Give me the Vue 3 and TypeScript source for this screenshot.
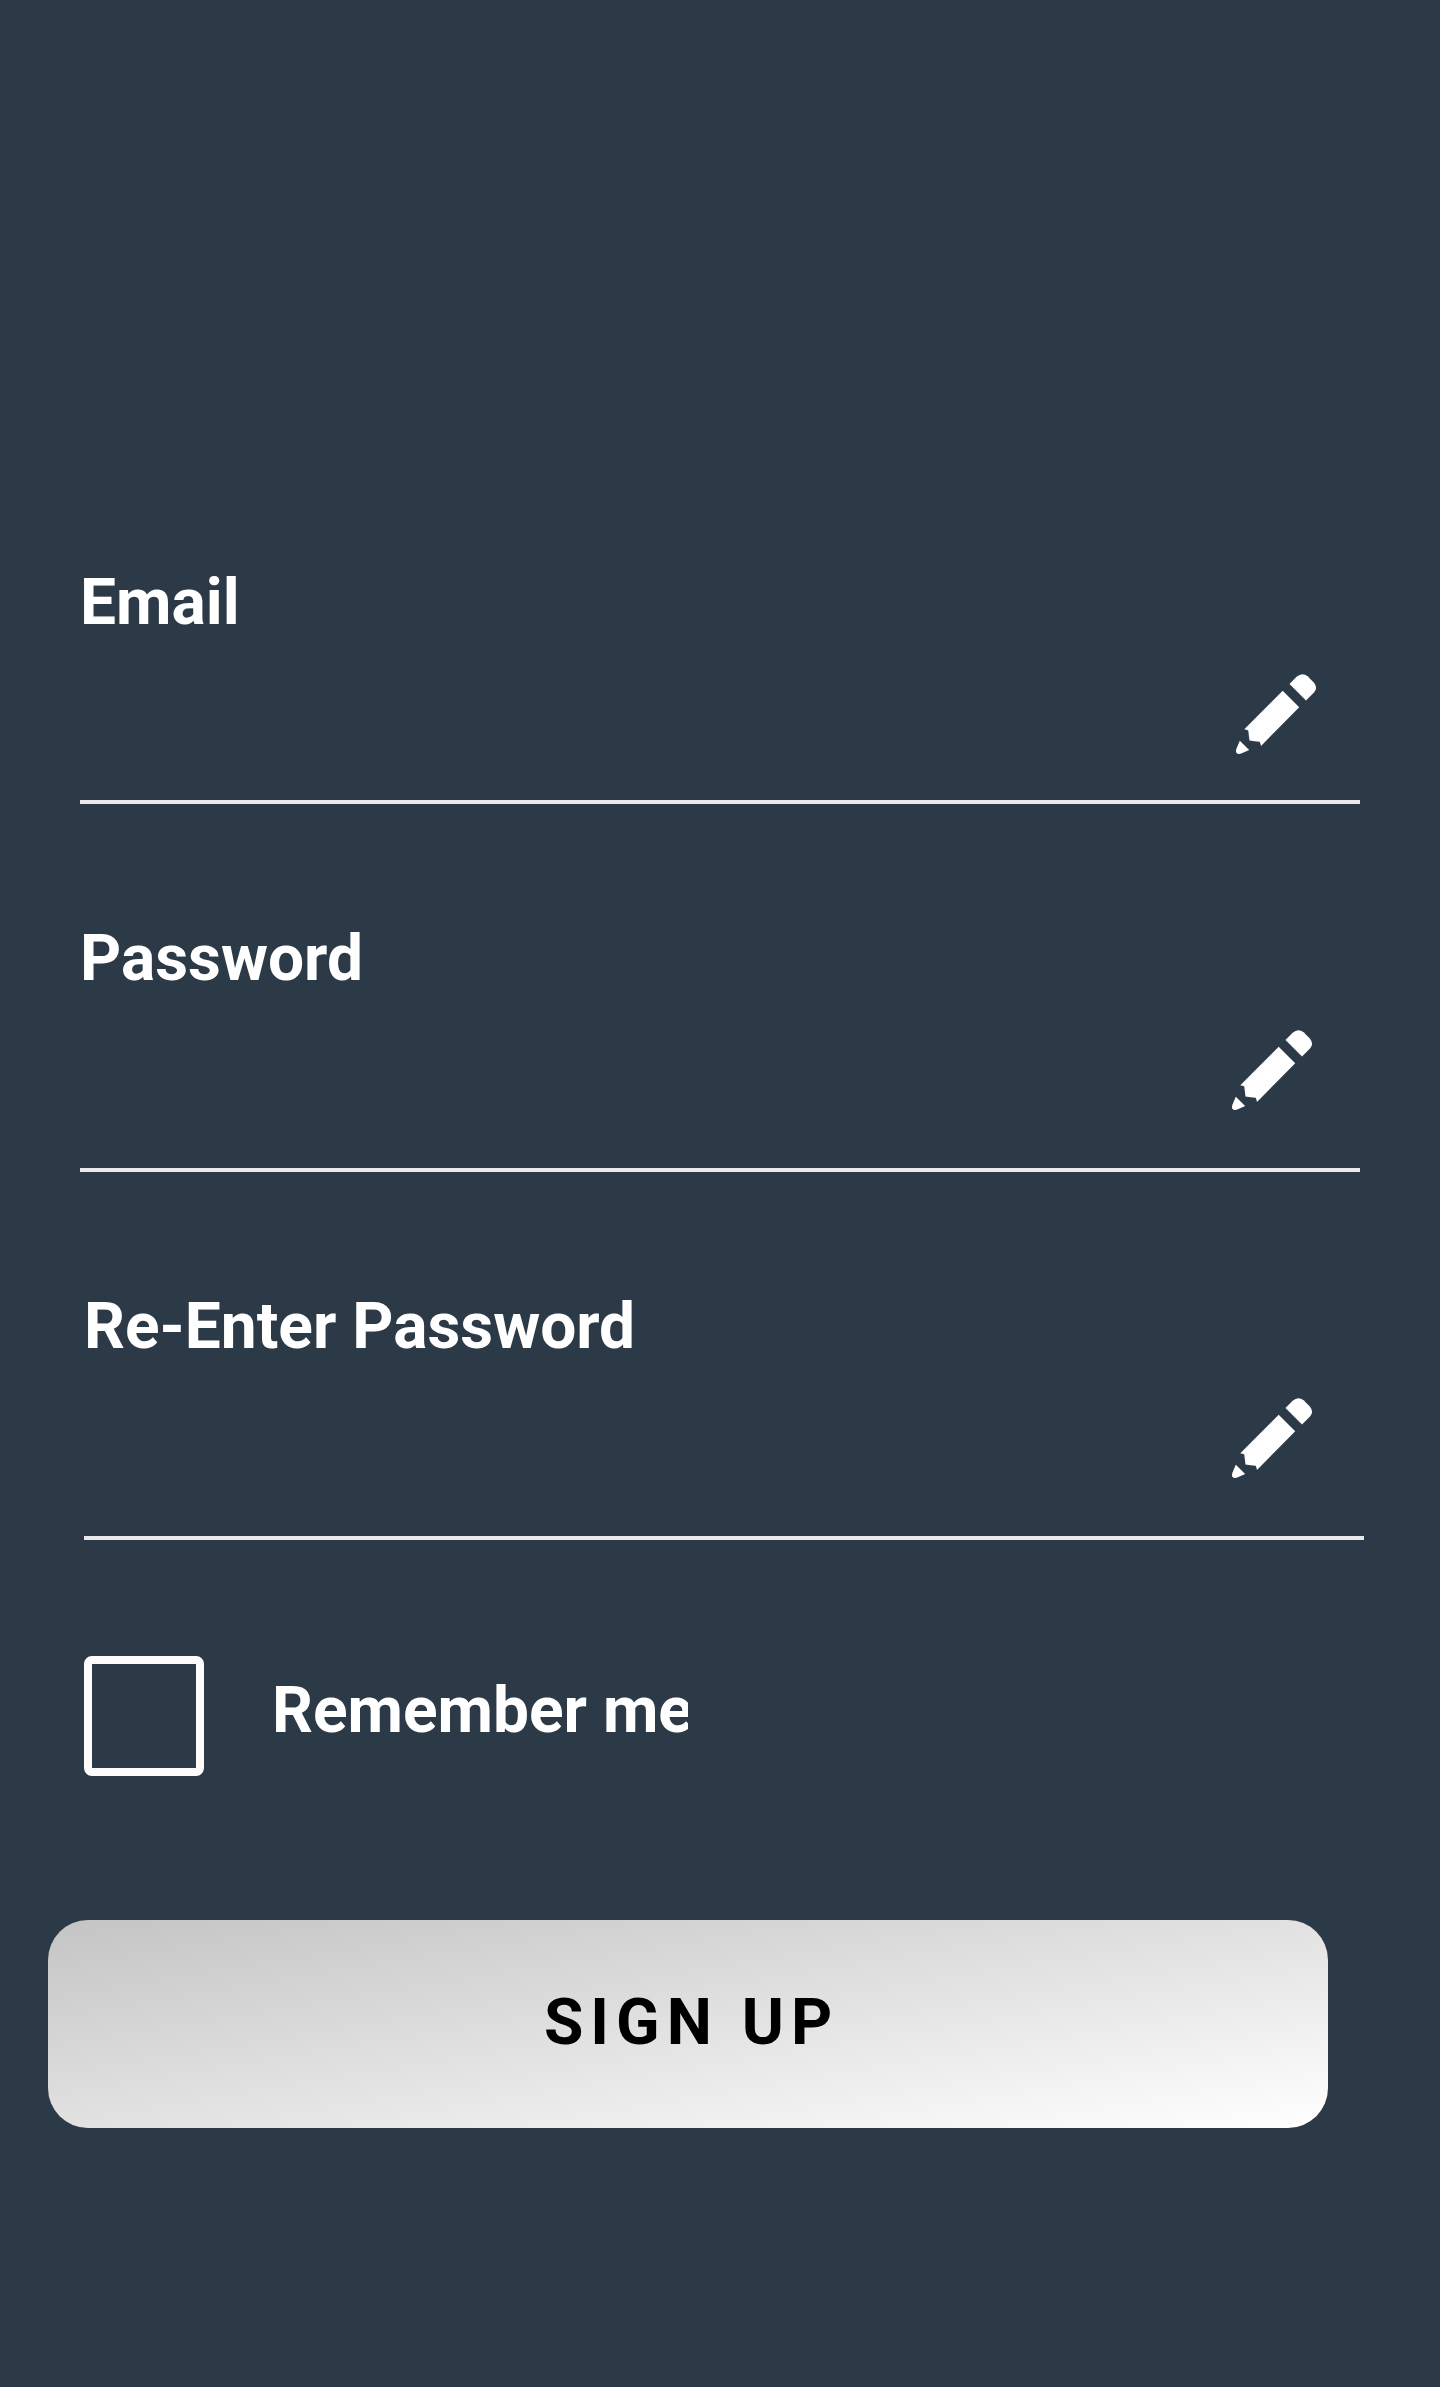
<script setup lang="ts">
import { ref } from 'vue'

interface Field {
  id: string
  label: string
}

const fields: Field[] = [
  { id: 'email', label: 'Email' },
  { id: 'password', label: 'Password' },
  { id: 'confirm', label: 'Re-Enter Password' },
]

const remember = ref<boolean>(false)
</script>

<template>
  <main class="screen">
    <section v-for="field in fields" :key="field.id" class="field" :class="field.id">
      <div class="label">{{ field.label }}</div>
      <svg class="pencil" viewBox="0 0 80 80" aria-hidden="true">
        <path d="M53.5 10 L60.6 2.8 Q66 -2.2 71.6 2.2 L77.8 8.4 Q82.2 13.6 78 18.4 L70 26.4 Z" />
        <path d="M46.7 16.8 L63.2 33.3 L25 71.9 Q24.6 69.6 23.6 67.8 Q18.5 67.4 13.5 66.6 Q12.8 61.6 12.3 56.6 Q10.5 55.6 8.3 55.2 Z" />
        <path d="M3.8 66.8 L13.2 76 L5.2 79.6 Q1.8 80.6 0.2 78.4 Q-0.2 77 0.1 75.6 Z" />
      </svg>
    </section>
    <div class="remember" @click="remember = !remember">
      <span class="box" role="checkbox" :aria-checked="remember"></span>
      <span class="remember-text">Remember me</span>
    </div>
    <button class="submit" type="button">SIGN UP</button>
  </main>
</template>

<style>
body {
  margin: 0;
  background: #2c3a47;
}
</style>

<style scoped>
.screen {
  box-sizing: border-box;
  width: 1440px;
  height: 2387px;
  padding-top: 565px;
  overflow: hidden;
  display: flex;
  flex-direction: column;
  background: #2c3a47;
  color: #fff;
  font-family: Roboto, sans-serif;
  font-size: 64px;
  font-weight: 700;
  line-height: 75px;
}

.field {
  box-sizing: border-box;
  flex: none;
  display: flex;
  flex-direction: column;
  width: 1280px;
  height: 239px;
  margin-left: 80px;
  border-bottom: 4px solid #e9e9ea;
}

.password,
.confirm {
  height: 251px;
}

.password {
  margin-top: 117px;
}

.confirm {
  margin-top: 117px;
  margin-left: 84px;
}

.label {
  white-space: nowrap;
}

.pencil {
  width: 80px;
  height: 80px;
  margin-top: 34px;
  margin-right: 44px;
  align-self: flex-end;
  fill: #fff;
  overflow: visible;
}

.password .pencil {
  margin-right: 48px;
}

.confirm .pencil {
  margin-right: 52px;
}

.remember {
  flex: none;
  display: flex;
  margin: 116px 0 0 84px;
  height: 120px;
}

.box {
  box-sizing: border-box;
  width: 120px;
  height: 120px;
  border: 8px solid #fffbfa;
  border-radius: 8px;
}

.remember-text {
  width: 416px;
  height: 75px;
  margin: 17px 0 0 68px;
  overflow: hidden;
  white-space: nowrap;
}

.submit {
  flex: none;
  width: 1280px;
  height: 208px;
  margin: 144px 0 0 48px;
  padding: 0 0 3px 7px;
  border: 0;
  border-radius: 40px;
  background: linear-gradient(to bottom right, #c4c4c4, #fff);
  color: #000;
  font: inherit;
  letter-spacing: 7px;
}
</style>
